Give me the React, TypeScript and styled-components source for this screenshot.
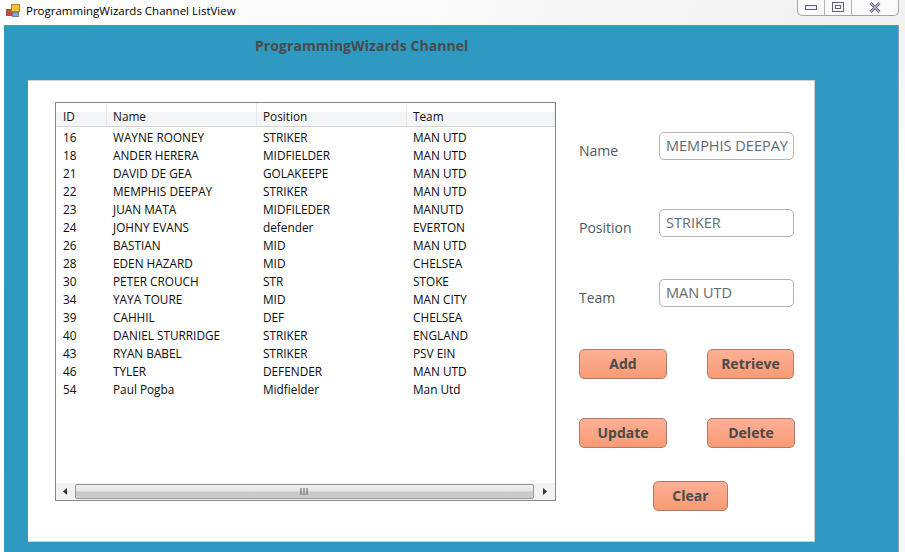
import styled, { createGlobalStyle } from "styled-components"

const players = [
  ["16", "WAYNE ROONEY", "STRIKER", "MAN UTD"],
  ["18", "ANDER HERERA", "MIDFIELDER", "MAN UTD"],
  ["21", "DAVID DE GEA", "GOLAKEEPE", "MAN UTD"],
  ["22", "MEMPHIS DEEPAY", "STRIKER", "MAN UTD"],
  ["23", "JUAN MATA", "MIDFILEDER", "MANUTD"],
  ["24", "JOHNY EVANS", "defender", "EVERTON"],
  ["26", "BASTIAN", "MID", "MAN UTD"],
  ["28", "EDEN HAZARD", "MID", "CHELSEA"],
  ["30", "PETER CROUCH", "STR", "STOKE"],
  ["34", "YAYA TOURE", "MID", "MAN CITY"],
  ["39", "CAHHIL", "DEF", "CHELSEA"],
  ["40", "DANIEL STURRIDGE", "STRIKER", "ENGLAND"],
  ["43", "RYAN BABEL", "STRIKER", "PSV EIN"],
  ["46", "TYLER", "DEFENDER", "MAN UTD"],
  ["54", "Paul Pogba", "Midfielder", "Man Utd"],
]

const fields = [
  { label: "Name", value: "MEMPHIS DEEPAY", gapBelow: 49 },
  { label: "Position", value: "STRIKER", gapBelow: 42 },
  { label: "Team", value: "MAN UTD", gapBelow: 42 },
]

const App: React.FC = () => {
  return (
    <Window>
      <GlobalStyle />

      <TitleBar>
        <AppIcon viewBox="0 0 14 14">
          <rect x="0.5" y="5.5" width="5" height="6" fill="#d9463a" stroke="#8c5a50" />
          <rect x="5.5" y="0.5" width="8" height="7" fill="#f5c23c" stroke="#a8842c" />
          <rect x="6.5" y="8.5" width="6" height="4" fill="#7fa7dc" stroke="#6a7fa8" />
        </AppIcon>
        <WindowTitle>ProgrammingWizards Channel ListView</WindowTitle>

        <WindowControls>
          <ControlButton $width={27}>
            <svg width="13" height="7" viewBox="0 0 13 7">
              <rect x="0.5" y="1.5" width="11" height="4" fill="#eef0f5" stroke="#5b6178" />
            </svg>
          </ControlButton>
          <ControlButton $width={27}>
            <svg width="12" height="11" viewBox="0 0 12 11">
              <rect x="0.5" y="0.5" width="11" height="9" fill="#f4f5f8" stroke="#5b6178" />
              <rect x="3.5" y="3.5" width="5" height="3" fill="#fff" stroke="#5b6178" />
            </svg>
          </ControlButton>
          <ControlButton $width={46}>
            <svg width="12" height="11" viewBox="0 0 12 11">
              <path d="M1.5 1 L10.5 10 M10.5 1 L1.5 10" stroke="#5b6178" strokeWidth="2.6" />
              <path d="M1.5 1 L10.5 10 M10.5 1 L1.5 10" stroke="#e9ebf0" strokeWidth="1" />
            </svg>
          </ControlButton>
        </WindowControls>
      </TitleBar>

      <BluePanel>
        <Heading>ProgrammingWizards Channel</Heading>

        <Card>
          <ListView>
            <HeaderRow>
              <HeaderCell $width={51}>ID</HeaderCell>
              <HeaderCell $width={150}>Name</HeaderCell>
              <HeaderCell $width={150}>Position</HeaderCell>
              <HeaderCell $width={148}>Team</HeaderCell>
            </HeaderRow>

            <Rows>
              {players.map((player) => (
                <Row key={player[0]}>
                  <Cell $width={50}>{player[0]}</Cell>
                  <Cell $width={150}>{player[1]}</Cell>
                  <Cell $width={150}>{player[2]}</Cell>
                  <Cell $width={140}>{player[3]}</Cell>
                </Row>
              ))}
            </Rows>

            <ScrollBar>
              <ScrollArrow $width={19}>
                <svg width="5" height="7" viewBox="0 0 5 7">
                  <path d="M4 0 L4 7 L0 3.5 Z" fill="#333" />
                </svg>
              </ScrollArrow>
              <ScrollThumb>
                <svg width="9" height="7" viewBox="0 0 9 7">
                  <path d="M1 0 V7 M4 0 V7 M7 0 V7" stroke="#5c5c5c" strokeWidth="1" />
                </svg>
              </ScrollThumb>
              <ScrollArrow $width={21}>
                <svg width="5" height="7" viewBox="0 0 5 7">
                  <path d="M1 0 L1 7 L5 3.5 Z" fill="#333" />
                </svg>
              </ScrollArrow>
            </ScrollBar>
          </ListView>

          <Form>
            {fields.map((field) => (
              <FieldRow key={field.label} $gapBelow={field.gapBelow}>
                <FieldLabel>{field.label}</FieldLabel>
                <TextBox>{field.value}</TextBox>
              </FieldRow>
            ))}

            <ButtonRow $gapBelow={39}>
              <ActionButton $width={88}>Add</ActionButton>
              <ActionButton $width={87}>Retrieve</ActionButton>
            </ButtonRow>
            <ButtonRow $gapBelow={33}>
              <ActionButton $width={88}>Update</ActionButton>
              <ActionButton $width={88}>Delete</ActionButton>
            </ButtonRow>
            <ClearRow>
              <ActionButton $width={75}>Clear</ActionButton>
            </ClearRow>
          </Form>
        </Card>
      </BluePanel>
    </Window>
  )
}

const GlobalStyle = createGlobalStyle`
  html,
  body {
    margin: 0;
    height: 100%;
    overflow: hidden;
    background: #fafafa;
  }
`

const Window = styled.div`
  width: 905px;
  height: 552px;
  overflow: hidden;
  font-family: "Open Sans", "Noto Sans", sans-serif;
  background: linear-gradient(115deg, #ffffff 0%, #fafafa 35%, #f1f1f1 78%, #ffffff 86%, #f7f7f7 100%);
`

const TitleBar = styled.div`
  height: 25px;
  display: flex;
  align-items: flex-start;
  padding-left: 6px;
  padding-right: 6px;
`

const AppIcon = styled.svg`
  width: 14px;
  height: 14px;
  margin-top: 4px;
  flex-shrink: 0;
`

const WindowTitle = styled.div`
  margin-left: 6px;
  margin-top: 2px;
  font-size: 11.5px;
  line-height: 17px;
  color: #000;
  white-space: nowrap;
`

const WindowControls = styled.div`
  margin-left: auto;
  display: flex;
  height: 16px;
  box-sizing: border-box;
  border: 1px solid #a4a4a8;
  border-top: none;
  border-radius: 0 0 5px 5px;
  background: rgba(255, 255, 255, 0.6);
`

const ControlButton = styled.div<{ $width: number }>`
  width: ${(p) => p.$width}px;
  box-sizing: border-box;
  display: flex;
  align-items: center;
  justify-content: center;
  border-right: 1px solid #b4b4b8;

  &:last-child {
    border-right: none;
  }
`

const BluePanel = styled.div`
  margin-left: 4px;
  width: 895px;
  height: 527px;
  box-sizing: border-box;
  background: #2e9ac2;
  border-top: 1px solid #7c8a90;
  border-right: 1px solid #8d9ba2;
  padding-left: 24px;
`

const Heading = styled.div`
  margin-left: 227px;
  padding-top: 10px;
  height: 54px;
  box-sizing: border-box;
  font-size: 14px;
  line-height: 20px;
  letter-spacing: 0.06px;
  font-weight: 700;
  color: #4a4a4a;
  white-space: nowrap;
`

const Card = styled.div`
  width: 787px;
  height: 462px;
  box-sizing: border-box;
  display: flex;
  align-items: flex-start;
  padding: 21px 0 0 27px;
  background: #fff;
  border: 1px solid #cfcfcf;
  border-left: none;
`

const ListView = styled.div`
  width: 501px;
  height: 399px;
  box-sizing: border-box;
  display: flex;
  flex-direction: column;
  border: 1px solid #828790;
  flex-shrink: 0;
`

const HeaderRow = styled.div`
  height: 24px;
  flex-shrink: 0;
  display: flex;
  box-sizing: border-box;
  border-bottom: 1px solid #d5d5d5;
  background: linear-gradient(#ffffff 0%, #ffffff 40%, #f4f5f7 41%, #f4f5f7 100%);
`

const HeaderCell = styled.div<{ $width: number }>`
  width: ${(p) => p.$width}px;
  padding-left: 6px;
  box-sizing: border-box;
  flex-shrink: 0;
  border-right: 1px solid #e6e8ec;
  font-size: 11.8px;
  line-height: 27px;
  color: #111;

  &:first-child {
    padding-left: 7px;
  }
`

const Rows = styled.div`
  flex: 1;
  padding-top: 1px;
`

const Row = styled.div`
  display: flex;
  height: 18px;
  padding-left: 7px;
`

const Cell = styled.div<{ $width: number }>`
  width: ${(p) => p.$width}px;
  font-size: 11.8px;
  line-height: 18px;
  color: #0a0a0a;
  white-space: nowrap;
  flex-shrink: 0;
`

const ScrollBar = styled.div`
  height: 17px;
  flex-shrink: 0;
  display: flex;
  background: #f2f2f2;
`

const ScrollArrow = styled.div<{ $width: number }>`
  width: ${(p) => p.$width}px;
  flex-shrink: 0;
  display: flex;
  align-items: center;
  justify-content: center;
`

const ScrollThumb = styled.div`
  flex: 1;
  margin: 1px 0;
  display: flex;
  align-items: center;
  justify-content: center;
  box-sizing: border-box;
  border: 1px solid #979797;
  border-radius: 2px;
  background: linear-gradient(#f0f0f0 0%, #e6e6e6 45%, #c8c8c8 55%, #cfcfcf 100%);
`

const Form = styled.div`
  margin-left: 23px;
  width: 216px;
  padding-top: 30px;
  display: flex;
  flex-direction: column;
  flex-shrink: 0;
`

const FieldRow = styled.div<{ $gapBelow: number }>`
  display: flex;
  align-items: flex-start;
  height: 28px;
  margin-bottom: ${(p) => p.$gapBelow}px;
`

const FieldLabel = styled.div`
  width: 80px;
  padding-top: 9px;
  font-size: 14px;
  line-height: 19px;
  color: #4d5a5f;
`

const TextBox = styled.div`
  width: 135px;
  height: 28px;
  box-sizing: border-box;
  padding-left: 6px;
  border: 1px solid #b3b3b3;
  border-radius: 5px;
  background: #fff;
  font-size: 14.5px;
  line-height: 25px;
  color: #5f6b70;
  white-space: nowrap;
  overflow: hidden;
`

const ButtonRow = styled.div<{ $gapBelow: number }>`
  display: flex;
  gap: 40px;
  margin-bottom: ${(p) => p.$gapBelow}px;
`

const ClearRow = styled.div`
  padding-left: 74px;
`

const ActionButton = styled.div<{ $width: number }>`
  width: ${(p) => p.$width}px;
  height: 30px;
  box-sizing: border-box;
  padding-bottom: 2px;
  border: 1px solid #b07a65;
  border-radius: 5px;
  background: linear-gradient(#fdb096, #f89a74);
  display: flex;
  align-items: center;
  justify-content: center;
  font-size: 14px;
  font-weight: 700;
  color: #4a4a4a;
`

export default App
